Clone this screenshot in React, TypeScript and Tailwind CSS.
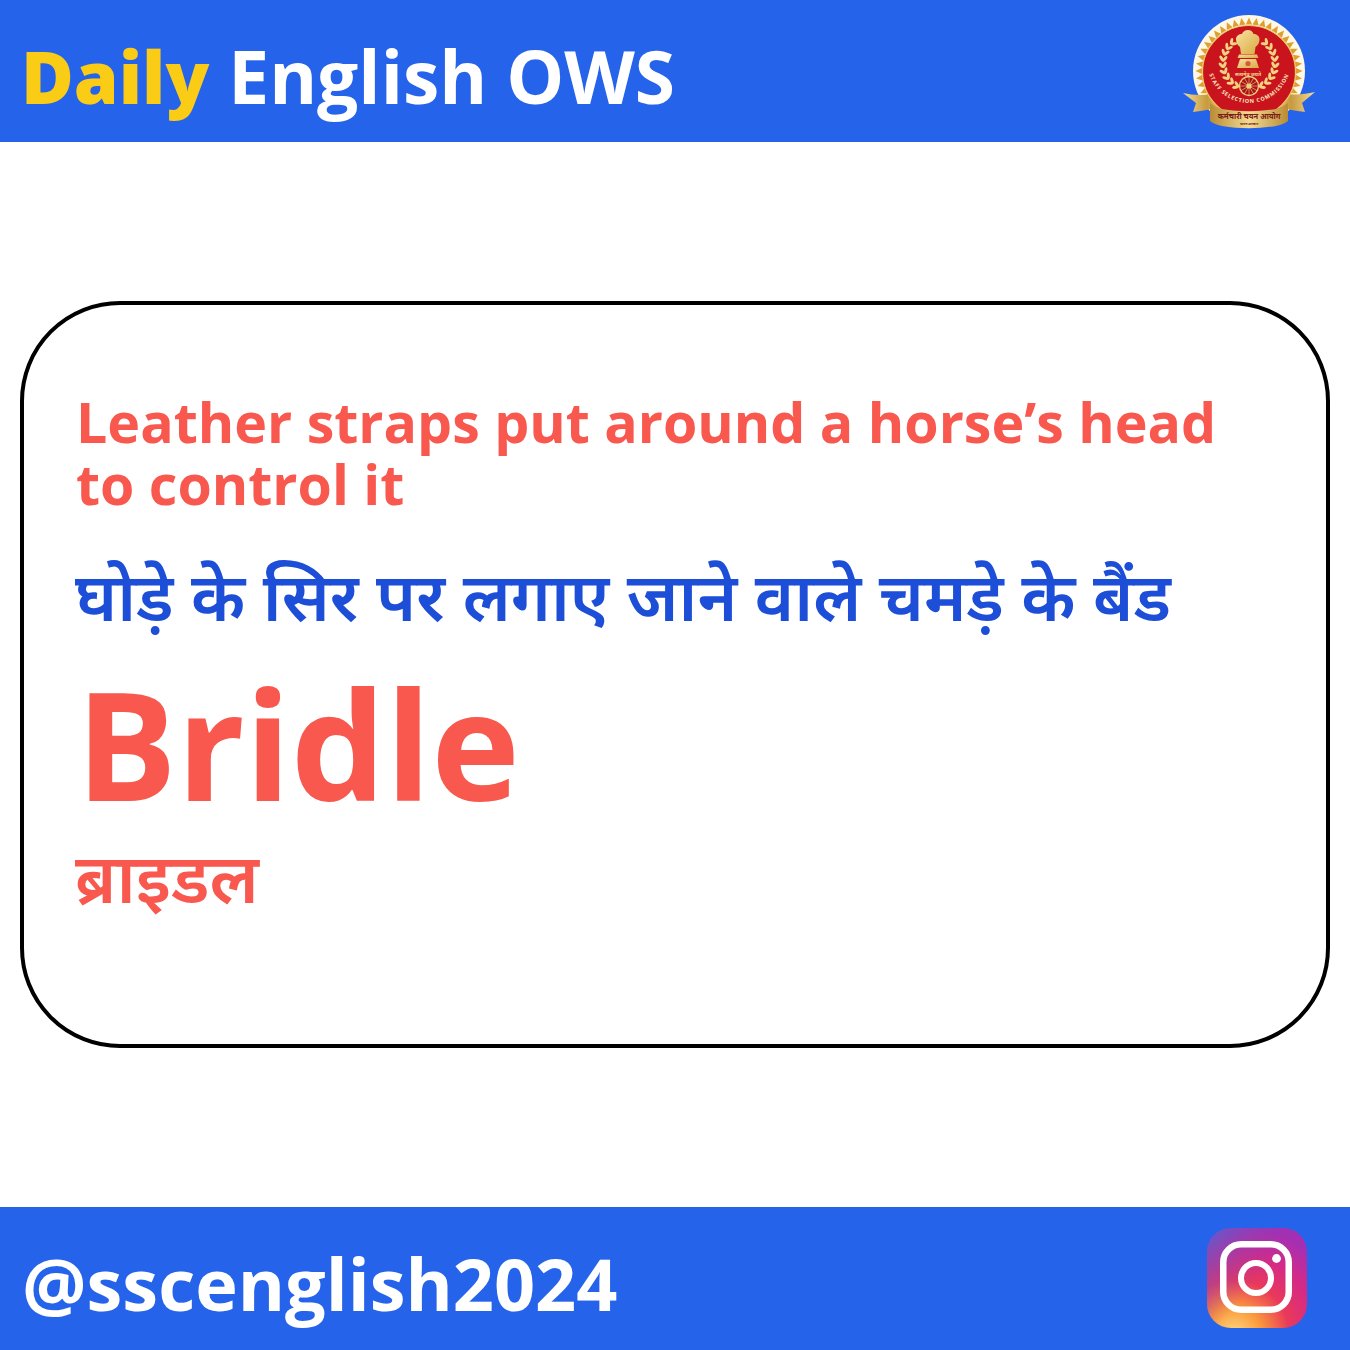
import React from 'react';

const font = { fontFamily: '"Open Sans", "Noto Sans", "Noto Sans Devanagari", "Lohit Devanagari", sans-serif' };

// laurel leaves along one side of the wreath, angles in degrees
const leafAngles = [-46, -32, -18, -4, 10, 24, 38, 52, 66];

const SscLogo = () => {
  const rays = Array.from({ length: 44 }, (_, i) => (i * 360) / 44);
  return (
    <svg width="134" height="116" viewBox="0 0 134 116" className="shrink-0">
      <defs>
        <linearGradient id="rib" x1="0" y1="0" x2="1" y2="0">
          <stop offset="0" stopColor="#f4dc94" />
          <stop offset="0.6" stopColor="#c79a3e" />
          <stop offset="1" stopColor="#e8c670" />
        </linearGradient>
        <linearGradient id="rib2" x1="1" y1="0" x2="0" y2="0">
          <stop offset="0" stopColor="#f4dc94" />
          <stop offset="0.6" stopColor="#c79a3e" />
          <stop offset="1" stopColor="#e8c670" />
        </linearGradient>
        <linearGradient id="mid" x1="0" y1="0" x2="1" y2="0">
          <stop offset="0" stopColor="#b98c34" />
          <stop offset="0.5" stopColor="#f2da94" />
          <stop offset="1" stopColor="#b98c34" />
        </linearGradient>
        <linearGradient id="gold" x1="0" y1="0" x2="1" y2="1">
          <stop offset="0" stopColor="#f8e2a0" />
          <stop offset="1" stopColor="#d9a942" />
        </linearGradient>
        <path id="arc" d="M 26 48 A 42 42 0 0 0 110 48" fill="none" />
      </defs>

      <circle cx="68" cy="58" r="56" fill="#fff8e6" />
      {rays.map((a) => (
        <polygon key={a} points="64.8,11.5 71.2,11.5 68,4.5" fill="#dba02e" transform={`rotate(${a} 68 58)`} />
      ))}

      {/* side ribbons run over the ring, behind the red disc */}
      <path d="M2 80c12 3 24 2 38 0l2 12c-10 4-20 6-30 7l3-9z" fill="url(#rib)" />
      <path d="M134 79c-12 3-24 3-38 1l-2 12c10 4 20 6 30 7l-3-9z" fill="url(#rib2)" />

      <circle cx="68" cy="59" r="46.5" fill="#c9141d" stroke="#efc867" strokeWidth="1.2" />

      {/* ashoka capital */}
      <g fill="url(#gold)">
        <path d="M67 17c3 0 5 2 5.5 4 3 0 6 2 6 5 0 3-1 6-4 8l-1 7H60l-1-7c-3-2-4-5-4-8 0-3 3-5 6-5 .5-2 3-4 6-4z" />
        <path d="M58 41.5h18l1.5 3.5h-21z" />
        <path d="M59 46h16l3 9H56z" />
      </g>
      <circle cx="67" cy="50.5" r="2.6" fill="#c9141d" opacity="0.6" />
      <text x="67" y="62.5" textAnchor="middle" fontSize="5" fill="#f3d98f" fontWeight="700" style={font}>सत्यमेव जयते</text>

      {/* wreath */}
      {[-1, 1].map((s) => (
        <g key={s} transform={`translate(68 0) scale(${s} 1)`}>
          {leafAngles.map((a) => {
            const r = (a * Math.PI) / 180;
            const x = 26 * Math.cos(r);
            const y = 50 + 26 * Math.sin(r);
            return (
              <g key={a}>
                <ellipse cx={x} cy={y} rx="3.4" ry="1.5" fill="#f2d382" transform={`rotate(${a - 90 + 34} ${x} ${y}) translate(3 0)`} />
                <ellipse cx={x} cy={y} rx="3.4" ry="1.5" fill="#f2d382" transform={`rotate(${a - 90 - 34} ${x} ${y}) translate(3 0)`} />
              </g>
            );
          })}
        </g>
      ))}

      {/* chakra */}
      <circle cx="68" cy="73" r="9.5" fill="#a91218" stroke="#f0d080" strokeWidth="1.3" />
      <circle cx="68" cy="73" r="2.6" fill="#f0d080" />
      <g stroke="#f0d080" strokeWidth="0.6">
        {[0, 30, 60, 90, 120, 150].map((a) => (
          <line key={a} x1="68" y1="64" x2="68" y2="82" transform={`rotate(${a} 68 73)`} />
        ))}
      </g>

      <text fontSize="5.4" fontWeight="700" fill="#fbeec4" letterSpacing="0.8" style={font}>
        <textPath href="#arc" startOffset="50%" textAnchor="middle">STAFF SELECTION COMMISSION</textPath>
      </text>

      <path d="M29 90c4 3 8 5 12 6 18 3 36 3 54 0 4-1 8-3 12-6v18c-4 3-8 4-12 5-18 3-36 3-54 0-4-1-8-2-12-5z" fill="url(#mid)" />
      <text x="68" y="105.5" textAnchor="middle" fontSize="7.5" fontWeight="700" fill="#7a1a12" style={font}>कर्मचारी चयन आयोग</text>
      <text x="68" y="112" textAnchor="middle" fontSize="3.6" fontWeight="700" fill="#7a1a12" style={font}>भारत सरकार</text>
    </svg>
  );
};

const InstagramLogo = () => (
  <svg width="100" height="100" viewBox="0 0 100 100" className="shrink-0 mb-0.5">
    <defs>
      <radialGradient id="ig1" cx="0.27" cy="1.08" r="1.12">
        <stop offset="0" stopColor="#ffdf86" />
        <stop offset="0.25" stopColor="#fb9a3c" />
        <stop offset="0.5" stopColor="#e9395a" />
        <stop offset="0.74" stopColor="#d62a85" />
        <stop offset="1" stopColor="#a52fb3" />
      </radialGradient>
      <linearGradient id="ig2" x1="0" y1="0" x2="0.55" y2="0.5">
        <stop offset="0" stopColor="#4f66d4" stopOpacity="0.9" />
        <stop offset="1" stopColor="#a02fb0" stopOpacity="0" />
      </linearGradient>
    </defs>
    <rect width="100" height="100" rx="24" fill="url(#ig1)" />
    <rect width="100" height="100" rx="24" fill="url(#ig2)" />
    <rect x="16.25" y="16.25" width="65.5" height="65.5" rx="18" fill="none" stroke="#fff" strokeWidth="6.5" />
    <circle cx="49" cy="50" r="15" fill="none" stroke="#fff" strokeWidth="6" />
    <circle cx="69.5" cy="30.5" r="4.4" fill="#fff" />
  </svg>
);

export default function App() {
  return (
    <div className="w-[1350px] h-[1350px] flex flex-col bg-white" style={font}>
      <header className="h-[142px] shrink-0 bg-[#2563eb] flex items-center justify-between pl-[21px] pr-[35px]">
        <h1 className="pt-2 text-[73px] leading-none font-bold text-white whitespace-nowrap">
          <span className="text-[72px] text-[#facc15] font-extrabold">Daily</span> English OWS
        </h1>
        <SscLogo />
      </header>

      <main className="flex-1 flex items-center px-5">
        <section className="w-full h-[747px] border-4 border-black rounded-[100px] px-[52px] pt-[86px]">
          <p className="text-[55.5px] leading-[62px] font-bold text-[#f8584e]">
            Leather straps put around a horse’s head to control it
          </p>
          <p className="-ml-px mt-[40px] text-[67.3px] leading-[80px] font-semibold text-[#1d4ed8] whitespace-nowrap">
            घोड़े के सिर पर लगाए जाने वाले चमड़े के बैंड
          </p>
          <p className="mt-[18px] text-[150px] leading-[180px] font-bold text-[#f8584e]">Bridle</p>
          <p className="-ml-px mt-[3px] text-[69px] leading-[80px] font-semibold text-[#f8584e]">ब्राइडल</p>
        </section>
      </main>

      <footer className="h-[143px] shrink-0 bg-[#2563eb] flex items-center justify-between pl-[22px] pr-[43px]">
        <span className="pt-2 text-[72px] leading-none font-bold text-white">@sscenglish2024</span>
        <InstagramLogo />
      </footer>
    </div>
  );
}
